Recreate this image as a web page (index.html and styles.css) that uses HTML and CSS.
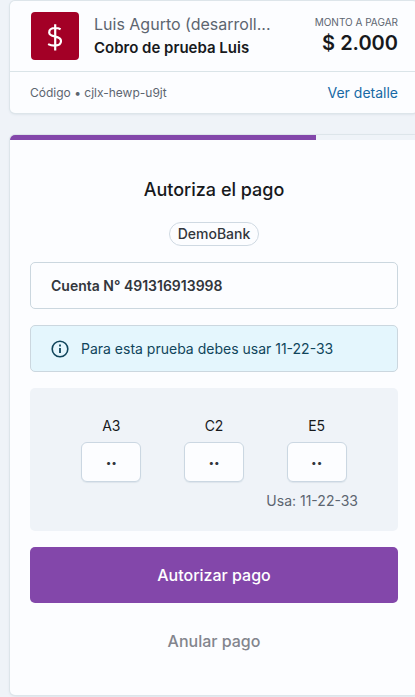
FILE: index.html
```html
<!DOCTYPE html>
<html lang="es">
<head>
<meta charset="utf-8">
<meta name="viewport" content="width=device-width, initial-scale=1">
<title>Autoriza el pago</title>
<link rel="stylesheet" href="styles.css">
</head>
<body>
<main class="page">
  <section class="card summary">
    <div class="summary-top">
      <svg class="logo" viewBox="0 0 48 48" aria-hidden="true">
        <rect width="48" height="48" rx="4" fill="#a30026"/>
        <path d="M29.6 17.2C28.1 16.4 26.3 16 24.3 16C20.6 16 18.2 17.7 18.2 20.4C18.2 26 30 22.8 30 29C30 32 27.4 33.6 23.6 33.6C21.1 33.6 18.8 33 17.1 32.1M24.2 12.2V38.6" fill="none" stroke="#fff" stroke-width="2.2"/>
      </svg>
      <div class="names">
        <div class="merchant">Luis Agurto (desarroll...</div>
        <div class="subject">Cobro de prueba Luis</div>
      </div>
      <div class="amount">
        <div class="amount-label">MONTO A PAGAR</div>
        <div class="amount-value">$ 2.000</div>
      </div>
    </div>
    <div class="summary-bottom">
      <span class="code">Código • cjlx-hewp-u9jt</span>
      <a class="detail" href="#">Ver detalle</a>
    </div>
  </section>

  <section class="card payment">
    <div class="progress"><div class="progress-fill"></div></div>
    <form class="content">
      <h1 class="title">Autoriza el pago</h1>
      <div class="bank">DemoBank</div>
      <div class="box account">Cuenta N° 491316913998</div>
      <div class="box notice">
        <svg class="info" viewBox="0 0 18 18" aria-hidden="true">
          <circle cx="9" cy="9" r="7.8" fill="none" stroke="#10455b" stroke-width="1.6"/>
          <path d="M9 8V13M9 4.6V6.4" stroke="#10455b" stroke-width="1.8"/>
        </svg>
        <span>Para esta prueba debes usar 11-22-33</span>
      </div>
      <div class="panel">
        <div class="coords">
          <div class="coord"><label for="a3">A3</label><input id="a3" type="text" placeholder="••" maxlength="2"></div>
          <div class="coord"><label for="c2">C2</label><input id="c2" type="text" placeholder="••" maxlength="2"></div>
          <div class="coord"><label for="e5">E5</label><input id="e5" type="text" placeholder="••" maxlength="2"></div>
        </div>
        <div class="hint">Usa: 11-22-33</div>
      </div>
      <button class="submit" type="button">Autorizar pago</button>
      <button class="cancel" type="button">Anular pago</button>
    </form>
  </section>
</main>
</body>
</html>
```
FILE: styles.css
```css
* { box-sizing: border-box; }
body {
  margin: 0;
  background: #eff3f8;
  color: #17191c;
  font-family: Inter, "Liberation Sans", sans-serif;
  font-size: 14px;
  line-height: 20px;
}
.page {
  padding: 0 0 6px 10px;
  overflow: hidden;
}
.card {
  margin-right: -3px;
  border-radius: 5px;
  background: #fcfdff;
  box-shadow: 0 0 0 1px #dde5ea, 0 1px 3px #cfd8e0;
  overflow: hidden;
}
.summary { margin-top: 1px; }
.summary-top {
  display: flex;
  height: 71px;
  padding: 11px 20px 0 21px;
  border-bottom: 1px solid #dae4e8;
}
.logo {
  width: 48px;
  height: 48px;
  flex: none;
}
.names {
  flex: 1;
  min-width: 0;
  margin-left: 15px;
  line-height: 24px;
}
.merchant {
  white-space: nowrap;
  color: #5c6570;
  font-size: 16px;
}
.subject {
  font-size: 15px;
  font-weight: 600;
  white-space: nowrap;
}
.amount {
  text-align: right;
  white-space: nowrap;
}
.amount-label {
  font-size: 10px;
  color: #5c6570;
}
.amount-value {
  font-size: 20px;
  line-height: 22px;
  font-weight: 600;
}
.summary-bottom {
  display: flex;
  align-items: center;
  justify-content: space-between;
  height: 41px;
  padding: 0 20px;
}
.code {
  font-size: 12px;
  color: #5c6570;
}
.detail {
  color: #1769a5;
  text-decoration: none;
}
.payment { margin-top: 22px; }
.progress {
  height: 5px;
  background: #eff3f8;
}
.progress-fill {
  width: 75%;
  height: 100%;
  background: #8347aa;
}
.content {
  display: flex;
  flex-direction: column;
  padding: 36px 20px 26px;
}
.title {
  margin: 0;
  font-size: 18px;
  font-weight: 500;
  line-height: 28px;
  text-align: center;
}
.bank {
  align-self: center;
  height: 24px;
  margin: 18px 0 16px;
  padding: 0 8px;
  border: 1px solid #cfd9e2;
  border-radius: 12px;
  line-height: 22px;
  color: #32363c;
  font-weight: 500;
}
.box {
  display: flex;
  align-items: center;
  height: 47px;
  padding: 0 20px;
  border: 1px solid #cbd7df;
  border-radius: 5px;
}
.account {
  font-weight: 600;
  color: #32363c;
}
.notice {
  gap: 12px;
  margin: 16px 0;
  background: #e4f6fd;
  color: #10455b;
}
.info {
  width: 18px;
  height: 18px;
  flex: none;
}
.panel {
  height: 143px;
  padding: 28px 30px 0;
  border-radius: 5px;
  background: #eff3f8;
}
.coords { display: flex; }
.coord {
  display: flex;
  flex: 1;
  flex-direction: column;
  align-items: center;
  gap: 6px;
}
.coord input {
  width: 60px;
  height: 40px;
  padding: 0;
  border: 1px solid #cbd7e2;
  border-radius: 6px;
  background: #fcfdff;
  box-shadow: 0 1px 1px #dde4eb;
  font-family: inherit;
  font-size: 10px;
  text-align: center;
}
.coord input::placeholder { color: #32363c; }
.hint {
  margin: 9px 10px 0;
  color: #5c6570;
  text-align: right;
}
.submit, .cancel {
  height: 56px;
  border: 0;
  border-radius: 5px;
  font: 500 16px/24px Inter, "Liberation Sans", sans-serif;
}
.submit {
  margin: 16px 0 10px;
  background: #8347aa;
  color: #fff;
}
.cancel {
  background: none;
  color: #83858d;
}
```
